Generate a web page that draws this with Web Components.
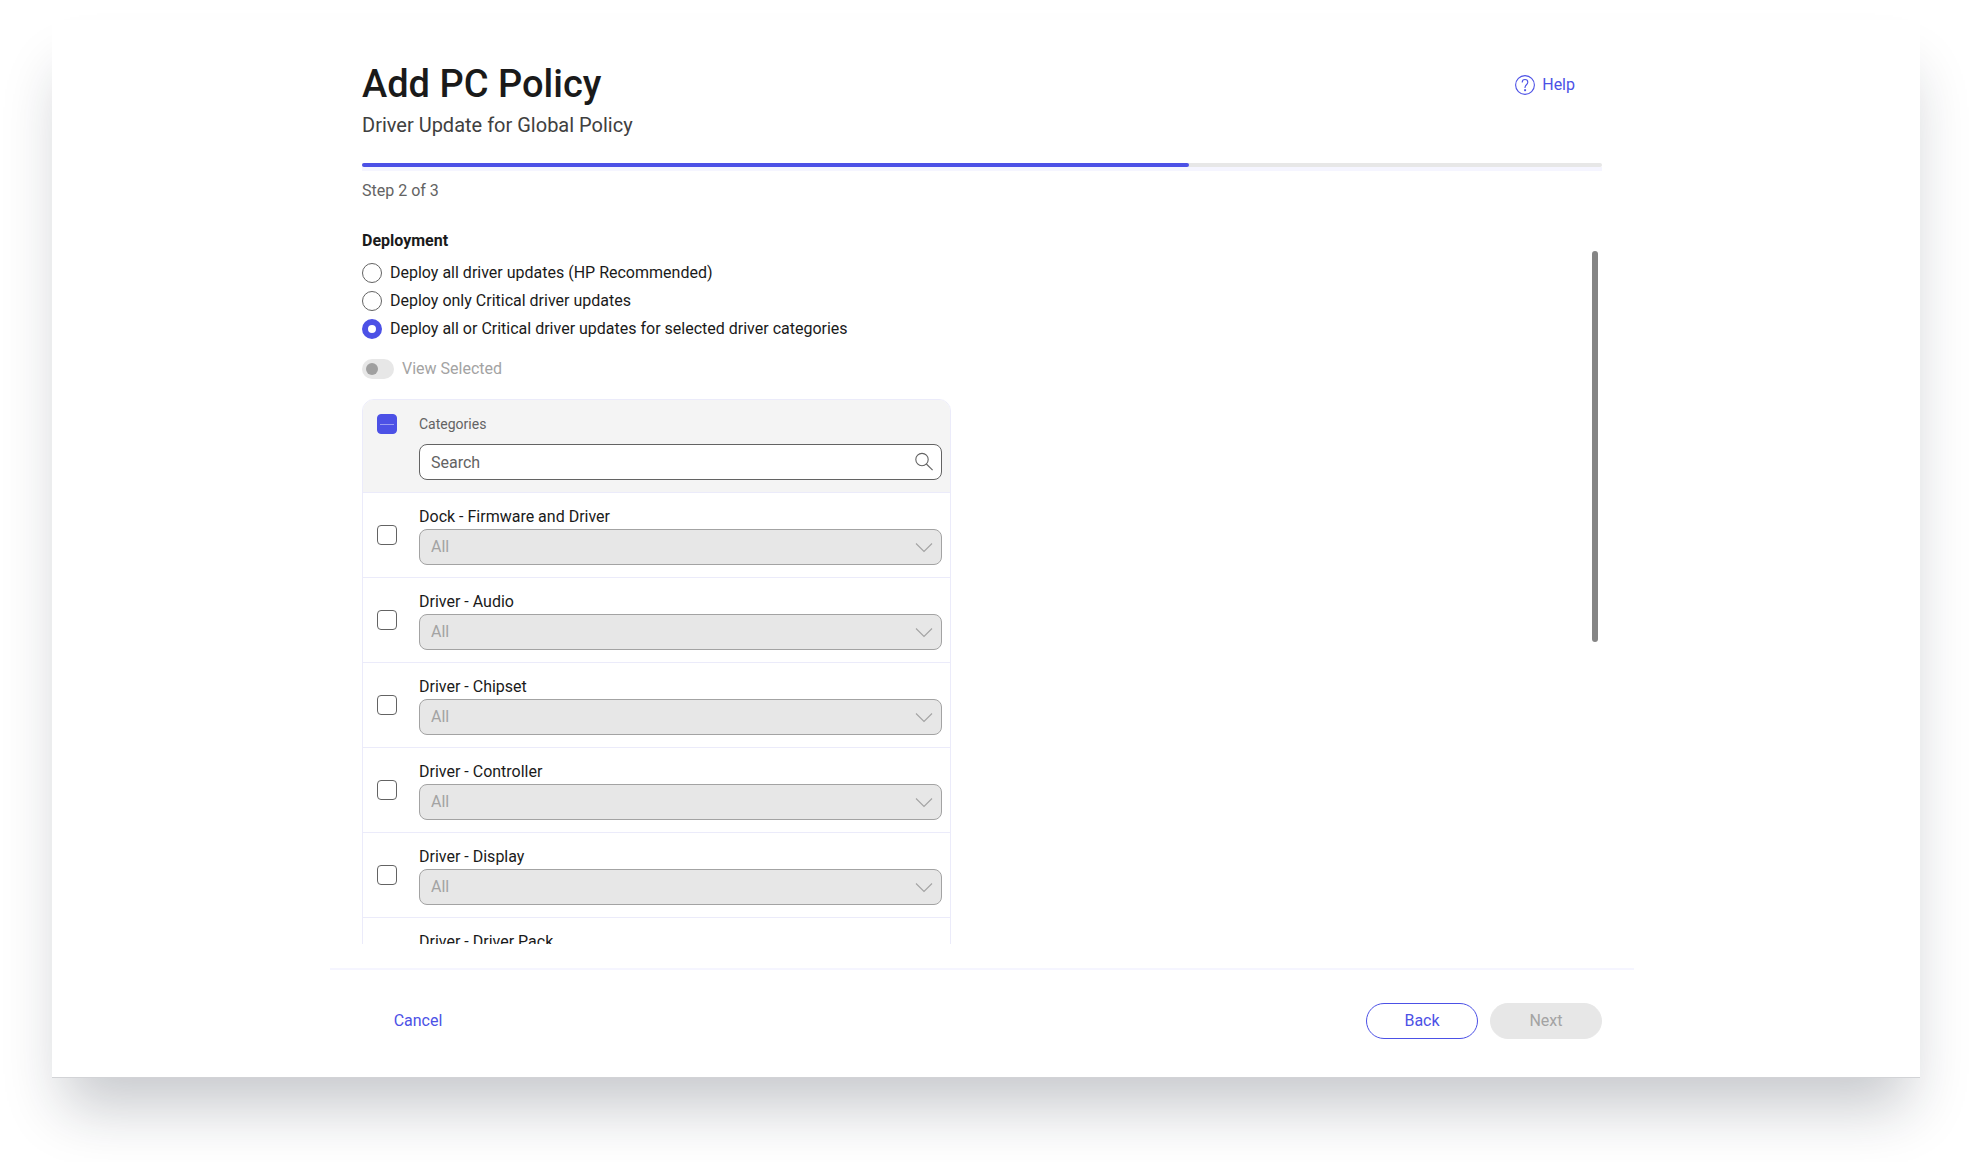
<!DOCTYPE html>
<html lang="en">
<head>
<meta charset="utf-8">
<title>Add PC Policy</title>
<style>
  :root {
    --accent: #4c51e6;
    --ink: #1a1a1a;
    --ink-soft: #404040;
    --muted: #636363;
    --disabled: #a3a3a3;
    --fill: #e7e7e7;
    --line: #ebebfa;
    --tint: #f5f5ff;
  }
  body {
    margin: 0;
    background: #fff;
    color: var(--ink);
    font: 16px/24px Roboto, "Liberation Sans", sans-serif;
  }
</style>
</head>
<body>
<policy-dialog>
  <wizard-header slot="header" heading="Add PC Policy" subheading="Driver Update for Global Policy" step="2" steps="3"></wizard-header>
  <scroll-pane>
    <deployment-options></deployment-options>
    <toggle-switch>View Selected</toggle-switch>
    <category-table></category-table>
  </scroll-pane>
  <wizard-footer slot="footer"></wizard-footer>
</policy-dialog>

<script>
class BaseElement extends HTMLElement {
  constructor() {
    super();
    this.attachShadow({ mode: 'open' });
  }
  connectedCallback() {
    this.shadowRoot.innerHTML = '<style>*{box-sizing:border-box}' + this.styles() + '</style>' + this.markup();
    this.ready();
  }
  ready() {}
}

customElements.define('policy-dialog', class extends BaseElement {
  styles() { return `
    :host { display: block; height: 100vh; box-sizing: border-box; padding: 20px 52px 85px; overflow: hidden; }
    .card {
      display: flex; height: 100%; padding-right: 8px; background: #fff;
      box-shadow: 0 1px 0 #d2d3d6, 0 42px 56px -12px rgba(20, 30, 48, .24);
    }
    .column { flex: 1; display: flex; flex-direction: column; max-width: 1304px; margin: 0 auto; min-width: 0; }
    main { flex: 1; min-height: 0; display: flex; margin: 0 32px 24px; }
    ::slotted(scroll-pane) { flex: 1; }
  `; }
  markup() { return `
    <div class="card"><div class="column">
      <slot name="header"></slot>
      <main><slot></slot></main>
      <slot name="footer"></slot>
    </div></div>
  `; }
});

customElements.define('wizard-header', class extends BaseElement {
  styles() { return `
    :host { display: block; padding: 39px 32px 16px; }
    .top { display: flex; justify-content: space-between; align-items: flex-start; }
    h1 { margin: 0 0 2px; font-size: 38px; line-height: 50px; font-weight: 500; }
    h2 { margin: 0; font-size: 20px; line-height: 28px; font-weight: 400; color: var(--ink-soft); }
    a { display: flex; gap: 7px; margin: 14px 27px 0 0; align-items: center; color: var(--accent); text-decoration: none; }
    svg { width: 20px; height: 20px; }
    .track { height: 4px; margin-top: 24px; border-radius: 2px; background: var(--fill); }
    .track div { height: 4px; border-radius: 2px; background: var(--accent); }
    .under { height: 4px; margin-bottom: 8px; background: var(--tint); }
    p { margin: 0; color: var(--muted); }
  `; }
  markup() {
    const step = +this.getAttribute('step'), steps = +this.getAttribute('steps');
    return `
    <div class="top">
      <div><h1>${this.getAttribute('heading')}</h1><h2>${this.getAttribute('subheading')}</h2></div>
      <a href="#help">
        <svg viewBox="0 0 20 20" fill="none" stroke="currentColor" stroke-width="1.1" aria-hidden="true">
          <circle cx="10" cy="10" r="9.4"/>
          <path d="M7.2 7.4C7.2 5.6 8.4 4.5 10 4.5s2.8 1.1 2.8 2.7c0 2.4-2.8 2.7-2.8 5.2v.5"/>
          <rect x="9.7" y="14.8" width=".8" height=".8" fill="currentColor"/>
        </svg>Help</a>
    </div>
    <div class="track" role="progressbar" aria-valuemin="0" aria-valuemax="${steps}" aria-valuenow="${step}"><div style="width:${step / steps * 100}%"></div></div>
    <div class="under"></div>
    <p>Step ${step} of ${steps}</p>
  `; }
});

customElements.define('scroll-pane', class extends BaseElement {
  styles() { return `
    :host { display: block; position: relative; min-height: 0; }
    .view { height: 100%; overflow-y: auto; scrollbar-width: none; padding-top: 10px; }
    .rail { position: absolute; top: 32px; right: 4px; bottom: 30px; width: 6px; }
    .thumb { height: 59%; border-radius: 3px; background: #858585; }
  `; }
  markup() { return `<div class="view"><slot></slot></div><div class="rail"><div class="thumb"></div></div>`; }
});

customElements.define('deployment-options', class extends BaseElement {
  styles() { return `
    :host { display: block; }
    fieldset { display: flex; flex-direction: column; gap: 4px; margin: 0; padding: 0; border: 0; }
    legend { padding: 0 0 8px; font-weight: 700; }
    label { display: flex; align-items: center; gap: 8px; }
    input {
      appearance: none; width: 20px; height: 20px; margin: 0; border: 1px solid var(--muted);
      border-radius: 50%; background: #fff;
    }
    input:checked { border: 6px solid var(--accent); }
  `; }
  markup() {
    const options = [
      'Deploy all driver updates (HP Recommended)',
      'Deploy only Critical driver updates',
      'Deploy all or Critical driver updates for selected driver categories'
    ];
    return `<fieldset><legend>Deployment</legend>${options.map((text, i) =>
      `<label><input type="radio" name="deployment"${i === 2 ? ' checked' : ''}><span>${text}</span></label>`).join('')}</fieldset>`;
  }
});

customElements.define('toggle-switch', class extends BaseElement {
  styles() { return `
    :host { display: block; margin: 16px 0 18px; }
    label { display: flex; align-items: center; gap: 8px; color: var(--disabled); }
    input {
      appearance: none; display: flex; align-items: center; width: 32px; height: 20px; margin: 0;
      padding: 0 4px; border-radius: 10px; background: var(--fill);
    }
    input::before { content: ""; width: 12px; height: 12px; border-radius: 50%; background: #a0a0a0; }
  `; }
  markup() { return `<label><input type="checkbox" role="switch" disabled><slot></slot></label>`; }
});

customElements.define('category-table', class extends BaseElement {
  styles() { return `
    :host { display: block; width: 47.5%; }
    table {
      width: 100%; table-layout: fixed; border-spacing: 0; border: 1px solid var(--line);
      border-radius: 12px; overflow: hidden; text-align: left;
    }
    col.pick { width: 56px; }
    th, td { padding: 12px 8px 12px 0; border-bottom: 1px solid var(--line); font-weight: 400; }
    th:first-child, td:first-child { padding-left: 14px; }
    th { background: #f4f4f4; vertical-align: top; }
    td label { display: block; }
    .caption { display: block; margin-bottom: 8px; font-size: 14px; color: var(--muted); }
    input[type=checkbox] {
      appearance: none; display: flex; align-items: center; justify-content: center;
      width: 20px; height: 20px; margin: 0; border: 1px solid var(--muted); border-radius: 4px; background: #fff;
    }
    th input[type=checkbox] { margin-top: 2px; }
    input[type=checkbox]:indeterminate { border-color: var(--accent); background: var(--accent); }
    input:indeterminate::before { content: ""; width: 14px; height: 1px; background: #9a9df2; }
    .field { display: grid; align-items: center; }
    .field > * { grid-area: 1 / 1; }
    .field svg { justify-self: end; width: 20px; height: 20px; margin-right: 8px; fill: none; pointer-events: none; }
    input[type=search], select {
      appearance: none; width: 100%; height: 36px; margin: 0; padding: 0 40px 0 11px;
      border: 1px solid var(--muted); border-radius: 8px; background: #fff; color: var(--ink);
      font: inherit; outline: 0;
    }
    input::placeholder { color: var(--muted); opacity: 1; }
    select:disabled { border-color: var(--disabled); background: var(--fill); color: var(--disabled); opacity: 1; }
  `; }
  markup() {
    const names = ['Dock - Firmware and Driver', 'Driver - Audio', 'Driver - Chipset', 'Driver - Controller', 'Driver - Display', 'Driver - Driver Pack'];
    return `
    <table>
      <colgroup><col class="pick"><col></colgroup>
      <thead><tr>
        <th><input type="checkbox" id="all" aria-label="Select all categories"></th>
        <th><label class="caption" for="search">Categories</label>
          <div class="field">
            <input type="search" id="search" placeholder="Search">
            <svg viewBox="0 0 20 20" stroke="#636363" stroke-width="1.1"><circle cx="8" cy="7.6" r="6.2"/><path d="M12.4 12l6.2 6.2"/></svg>
          </div></th>
      </tr></thead>
      <tbody>${names.map((name, i) => `<tr>
        <td><input type="checkbox" aria-labelledby="name${i}"></td>
        <td><label id="name${i}" for="scope${i}">${name}</label>
          <div class="field">
            <select id="scope${i}" disabled><option>All</option></select>
            <svg viewBox="0 0 20 20" stroke="#a3a3a3" stroke-width="1.1"><path d="M2 6.5l8 8 8-8"/></svg>
          </div></td>
      </tr>`).join('')}</tbody>
    </table>`;
  }
  ready() { this.shadowRoot.getElementById('all').indeterminate = true; }
});

customElements.define('wizard-footer', class extends BaseElement {
  styles() { return `
    :host { display: block; border-top: 2px solid var(--tint); }
    footer { display: flex; align-items: center; gap: 12px; padding: 33px 32px 38px; }
    button {
      width: 112px; height: 36px; padding: 0; border: 1px solid var(--accent); border-radius: 18px;
      background: #fff; color: var(--accent); font: inherit;
    }
    .plain { border-color: transparent; background: none; margin-right: auto; }
    button:disabled { border-color: var(--fill); background: var(--fill); color: var(--disabled); }
  `; }
  markup() { return `
    <footer>
      <button class="plain">Cancel</button>
      <button>Back</button>
      <button disabled>Next</button>
    </footer>
  `; }
});
</script>
</body>
</html>
